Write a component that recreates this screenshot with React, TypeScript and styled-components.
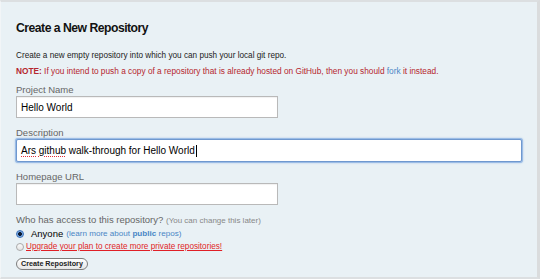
import * as React from 'react';
import styled, { createGlobalStyle } from 'styled-components';

const GlobalStyle = createGlobalStyle`
    html, body {
        margin: 0;
        padding: 0;
        background: #fff;
    }
    body {
        font-family: "Liberation Sans", Arial, sans-serif;
    }
`;

const Panel = styled.div`
    box-sizing: border-box;
    width: 540px;
    height: 279px;
    background: #e9f1f5;
    border-top: 2px solid #dcdfe1;
    border-right: 3px solid #dadcdd;
    border-bottom: 2px solid #dcdfe1;
    border-left: 1px solid #f2f5f7;
    padding: 17px 0 0 15px;
`;

const Title = styled.h1`
    margin: 0;
    font-size: 12.2px;
    letter-spacing: -0.5px;
    font-weight: bold;
    color: #111;
    line-height: 18px;
`;

const Intro = styled.p`
    margin: 13px 0 0;
    font-size: 8.2px;
    line-height: 12px;
    color: #222;
`;

const Note = styled.p`
    margin: 3px 0 0;
    font-size: 8.3px;
    line-height: 12px;
    color: #b5262e;

    strong {
        font-weight: bold;
    }
`;

const Link = styled.a`
    color: #4a86c5;
    text-decoration: none;
`;

const Fields = styled.div`
    margin-top: 7px;
`;

const Field = styled.div`
    display: flex;
    flex-direction: column;
`;

const Label = styled.label`
    font-size: 9.5px;
    line-height: 12px;
    color: #666;
`;

const TextInput = styled.div<{ $wide?: boolean; $focused?: boolean }>`
    box-sizing: border-box;
    width: ${p => (p.$wide ? '506px' : '262px')};
    height: ${p => (p.$focused ? '23px' : '22px')};
    background: #fff;
    border: 1px solid ${p => (p.$focused ? '#6f98cf' : '#b9b9b9')};
    box-shadow: ${p =>
        p.$focused ? '0 0 0 1px #9bbce5, 0 0 2px 1px #a9c6ea' : 'inset 0 1px 1px rgba(0,0,0,0.06)'};
    border-radius: ${p => (p.$focused ? '2px' : '0')};
    padding: 0 4px;
    display: flex;
    align-items: center;
    font-size: 10px;
    color: #000;
    margin-bottom: 9px;
`;

const Misspelled = styled.span`
    text-decoration: underline dotted #e0303a;
    text-underline-offset: 2px;
`;

const Caret = styled.span`
    display: inline-block;
    width: 1px;
    height: 12px;
    background: #000;
    margin-left: 1px;
`;

const AccessQuestion = styled.div`
    margin-top: -1px;
    font-size: 9.5px;
    line-height: 13px;
    color: #666;
`;

const Hint = styled.span`
    font-size: 8px;
    color: #888;
`;

const RadioRow = styled.div`
    display: flex;
    align-items: center;
    height: 13px;
    font-size: 9px;
`;

const Radio = styled.span<{ $checked?: boolean }>`
    box-sizing: border-box;
    width: 8px;
    height: 8px;
    border-radius: 50%;
    border: 1px solid ${p => (p.$checked ? '#3a6fb5' : '#aaa')};
    background: ${p =>
        p.$checked
            ? 'radial-gradient(circle, #0b1a33 0 1.6px, #6fa1e0 2.2px, #a8c8f0 100%)'
            : 'linear-gradient(#fafafa, #e4e4e4)'};
    margin-right: ${p => (p.$checked ? '7px' : '2px')};
    flex: none;
`;

const Owner = styled.span`
    color: #000;
    font-size: 9.5px;
    margin-right: 3px;
`;

const Aside = styled.span`
    color: #4a86c5;
    font-size: 8.1px;

    b {
        font-weight: bold;
    }
`;

const Upgrade = styled.a`
    color: #e01f26;
    font-size: 8.2px;
    text-decoration: underline;
`;

const Button = styled.button`
    margin-top: 5px;
    box-sizing: border-box;
    height: 12px;
    padding: 0 4px;
    border: 1px solid #7d7d7d;
    border-radius: 7px;
    background: linear-gradient(#ffffff, #e6e6e6);
    font-family: "Liberation Sans", Arial, sans-serif;
    font-size: 7.2px;
    font-weight: bold;
    color: #222;
    line-height: 10px;
    display: block;
`;

export default function App(): JSX.Element {
    return (
        <>
            <GlobalStyle />
            <Panel>
                <Title>Create a New Repository</Title>
                <Intro>Create a new empty repository into which you can push your local git repo.</Intro>
                <Note>
                    <strong>NOTE:</strong> If you intend to push a copy of a repository that is already hosted on
                    GitHub, then you should <Link>fork</Link> it instead.
                </Note>
                <Fields>
                    <Field>
                        <Label>Project Name</Label>
                        <TextInput>Hello World</TextInput>
                    </Field>
                    <Field>
                        <Label>Description</Label>
                        <TextInput $wide $focused>
                            <Misspelled>Ars</Misspelled>&nbsp;<Misspelled>github</Misspelled>&nbsp;walk-through for
                            Hello World
                            <Caret />
                        </TextInput>
                    </Field>
                    <Field>
                        <Label>Homepage URL</Label>
                        <TextInput />
                    </Field>
                </Fields>
                <AccessQuestion>
                    Who has access to this repository? <Hint>(You can change this later)</Hint>
                </AccessQuestion>
                <RadioRow>
                    <Radio $checked />
                    <Owner>Anyone</Owner>
                    <Aside>
                        (learn more about <b>public</b> repos)
                    </Aside>
                </RadioRow>
                <RadioRow>
                    <Radio />
                    <Upgrade>Upgrade your plan to create more private repositories!</Upgrade>
                </RadioRow>
                <Button>Create Repository</Button>
            </Panel>
        </>
    );
}
